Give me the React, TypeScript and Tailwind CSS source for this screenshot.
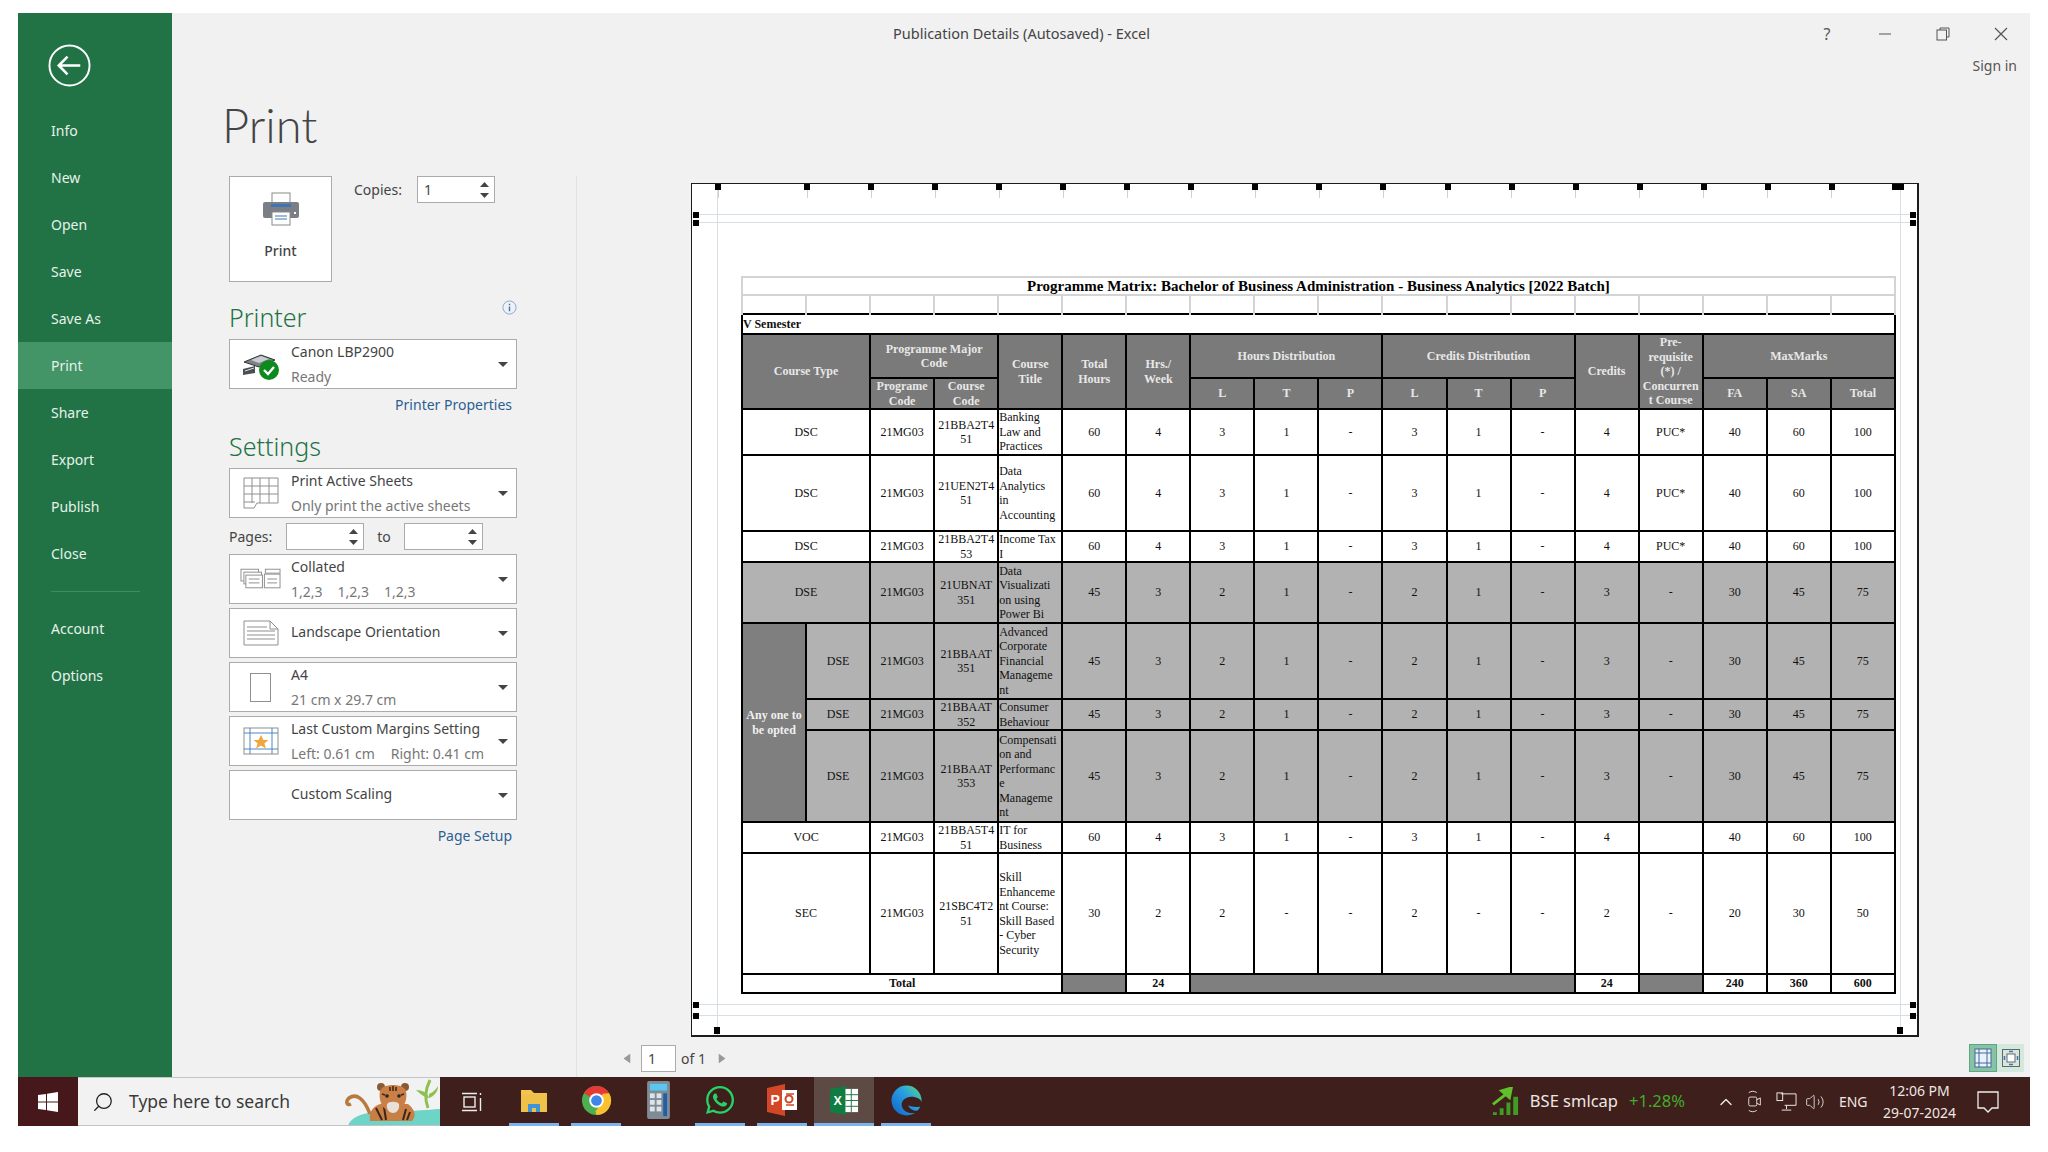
import { ReactNode } from "react";
import { ChevronUp, Search, Volume2 } from "lucide-react";
import { FaWhatsapp } from "react-icons/fa";

const menuTop = ["Info", "New", "Open", "Save", "Save As", "Print", "Share", "Export", "Publish", "Close"];

const Triangle = ({ up, size = "w-[9px] h-[5px]", color = "#444" }: { up?: boolean; size?: string; color?: string }) => (
  <svg viewBox="0 0 10 6" className={size} preserveAspectRatio="none">
    <path d={up ? "M5 0 L10 6 L0 6 Z" : "M0 0 L10 0 L5 6 Z"} fill={color} />
  </svg>
);

const Spinner = ({ value, w }: { value?: string; w: string }) => (
  <div className={`${w} h-[27px] bg-white border border-[#ababab] flex items-center pl-[6px] pr-[5px]`}>
    <span className="flex-1 text-[14px] text-[#444]">{value}</span>
    <div className="flex flex-col gap-[6px]">
      <Triangle up />
      <Triangle />
    </div>
  </div>
);

const Dropdown = ({ icon, title, sub }: { icon?: ReactNode; title: string; sub?: ReactNode }) => (
  <div className="w-[288px] h-[50px] bg-white border border-[#ababab] flex items-center">
    <div className="w-[61px] flex justify-center shrink-0">{icon}</div>
    <div className={`flex-1 flex flex-col min-w-0 whitespace-nowrap leading-[25px] text-[14px] text-[#444] ${sub ? "" : "pb-[3px]"}`}>
      <span>{title}</span>
      {sub && <span className="text-[#777]">{sub}</span>}
    </div>
    <div className="mr-[8px] shrink-0 flex">
      <Triangle size="w-[10px] h-[5px]" />
    </div>
  </div>
);

const PrinterIcon = () => (
  <svg viewBox="0 0 36 34" className="w-[36px] h-[34px]">
    <rect x="9" y="1" width="18" height="11" fill="#fff" stroke="#8a8a8a" />
    <rect x="0" y="10" width="36" height="16" rx="2" fill="#7b7f85" />
    <rect x="8" y="12" width="20" height="3" fill="#3f74b5" />
    <rect x="9" y="20" width="18" height="13" fill="#fff" stroke="#8a8a8a" />
    <path d="M12 24h12M12 27h12" stroke="#3f74b5" />
    <rect x="31" y="20" width="2" height="2" fill="#fff" />
  </svg>
);

const SmallPrinter = () => (
  <svg viewBox="0 0 40 32" className="w-[40px] h-[32px]">
    <path d="M3 14 L20 7 L34 12 L18 19 Z" fill="#7d8288" stroke="#333" />
    <path d="M10 12 L20 8 L28 11 L18 15 Z" fill="#c9ccd0" />
    <path d="M2 21 L14 18 L14 25 L2 27 Z" fill="#4b4f55" />
    <path d="M4 23 L13 20" stroke="#ddd" />
    <circle cx="28" cy="22" r="10" fill="#0c8a1e" />
    <path d="M23 22 L27 26 L33 19" fill="none" stroke="#fff" strokeWidth="2.4" />
  </svg>
);

const SheetsIcon = () => (
  <svg viewBox="0 0 36 32" className="w-[36px] h-[32px]" fill="none" stroke="#8f8f8f">
    <path d="M1 1h34v25H14l-3 5H1z" fill="#fff" />
    <path d="M1 9h34M1 17h34M1 25h11M9 1v25M17 1v25M26 1v25" />
  </svg>
);

const CollatedIcon = () => (
  <svg viewBox="0 0 42 22" className="w-[41px] h-[22px]" fill="#fff" stroke="#8f8f8f">
    <rect x="1" y="1" width="18" height="12" />
    <rect x="4" y="4" width="18" height="12" />
    <rect x="6" y="7" width="17" height="13" />
    <rect x="26" y="1" width="15" height="4" />
    <rect x="25" y="6" width="16" height="14" />
    <path d="M9 11h11M9 15h11M28 11h10M28 15h10" />
  </svg>
);

const LandscapeIcon = () => (
  <svg viewBox="0 0 36 26" className="w-[36px] h-[26px]" fill="none" stroke="#8f8f8f">
    <path d="M1 1h26l8 8v16H1z" fill="#fff" />
    <path d="M27 1v8h8M4 7h20M4 11h28M4 15h28M4 19h28" />
  </svg>
);

const MarginsIcon = () => (
  <svg viewBox="0 0 36 28" className="w-[36px] h-[28px]" fill="none">
    <rect x="1" y="1" width="34" height="26" fill="#fff" stroke="#8f8f8f" />
    <path d="M7 1v26M29 1v26M1 6h34M1 22h34" stroke="#4a86c8" />
    <path d="M18 8l2.4 5h5l-4 3.4 1.5 5-4.9-3-4.9 3 1.5-5-4-3.4h5z" fill="#f0a63c" />
  </svg>
);

const ChromeIcon = () => (
  <svg viewBox="0 0 32 32" className="w-[31px] h-[31px]">
    <circle cx="16" cy="16" r="15" fill="#4caf50" />
    <path d="M16 1a15 15 0 0 1 13 7.5L16 16 3 8.5A15 15 0 0 1 16 1z" fill="#e53935" />
    <path d="M29 8.5A15 15 0 0 1 16 31l-1-4 7-9 0-9z" fill="#fbc02d" />
    <circle cx="16" cy="16" r="7.5" fill="#fff" />
    <circle cx="16" cy="16" r="5.5" fill="#3f86e8" />
  </svg>
);

const TaskApp = ({ children, line = true, active }: { children: ReactNode; line?: boolean; active?: boolean }) => (
  <div className="w-[62px] h-full flex justify-center shrink-0">
    <div
      className={`h-full flex items-center justify-center border-b-[3px] ${active ? "w-[60px] bg-[#5d4a45]" : "w-[50px]"} ${
        line ? "border-[#7ab4ea]" : "border-transparent"
      }`}
    >
      {children}
    </div>
  </div>
);

const Tiger = () => (
  <svg viewBox="0 0 100 48" className="w-[100px] h-[48px] ml-auto shrink-0">
    <path d="M8 48 C12 34 40 32 62 33 C80 33 95 31 100 31 L100 48 Z" fill="#6fd4c8" />
    <path d="M88 30 C84 20 86 10 90 2" stroke="#8cc152" strokeWidth="3" fill="none" />
    <path d="M88 20 C82 18 78 14 76 12 C84 12 88 16 89 20 M89 16 C94 14 97 10 98 8 C98 14 94 18 89 20" fill="#8cc152" />
    <path d="M30 36 C24 20 16 15 9 20 C5 24 7 28 11 26" stroke="#b9793d" strokeWidth="3.5" fill="none" />
    <path d="M30 43 C28 30 38 24 50 26 L68 26 C76 32 76 39 72 43 Z" fill="#c87f45" />
    <path d="M36 30l6 12M44 29l2 13M66 31l-3 11M70 34l-3 8" stroke="#3d2518" strokeWidth="2" />
    <circle cx="41" cy="9" r="4" fill="#8a5a34" />
    <circle cx="65" cy="9" r="4" fill="#8a5a34" />
    <path d="M40 13 C42 5 64 5 66 13 C68 24 62 34 53 34 C44 34 38 24 40 13 Z" fill="#c97f45" />
    <path d="M47 26 C49 23 57 23 59 26 C60 32 56 35 53 35 C50 35 46 32 47 26Z" fill="#e6e2da" />
    <circle cx="47" cy="18" r="1.8" fill="#1e2a2a" />
    <circle cx="59" cy="18" r="1.8" fill="#1e2a2a" />
    <path d="M50 9v4M53 8v5M56 9v4M42 16l3 1M64 16l-3 1" stroke="#3d2518" strokeWidth="1.5" />
  </svg>
);

type Row = {
  type?: string;
  code: string;
  title: string;
  nums: string[];
  h: string;
  shade?: boolean;
  opt?: boolean;
};

const dscNums = ["60", "4", "3", "1", "-", "3", "1", "-", "4", "PUC*", "40", "60", "100"];
const dseNums = ["45", "3", "2", "1", "-", "2", "1", "-", "3", "-", "30", "45", "75"];

const rows: Row[] = [
  { type: "DSC", code: "21BBA2T4\n51", title: "Banking\nLaw and\nPractices", nums: dscNums, h: "h-[46px]" },
  { type: "DSC", code: "21UEN2T4\n51", title: "Data\nAnalytics\nin\nAccounting", nums: dscNums, h: "h-[76px]" },
  { type: "DSC", code: "21BBA2T4\n53", title: "Income Tax\nI", nums: dscNums, h: "h-[31px]" },
  { type: "DSE", code: "21UBNAT\n351", title: "Data\nVisualizati\non using\nPower Bi", nums: dseNums, h: "h-[61px]", shade: true },
  { type: "DSE", code: "21BBAAT\n351", title: "Advanced\nCorporate\nFinancial\nManageme\nnt", nums: dseNums, h: "h-[76px]", shade: true, opt: true },
  { type: "DSE", code: "21BBAAT\n352", title: "Consumer\nBehaviour", nums: dseNums, h: "h-[31px]", shade: true, opt: true },
  { type: "DSE", code: "21BBAAT\n353", title: "Compensati\non and\nPerformanc\ne\nManageme\nnt", nums: dseNums, h: "h-[92px]", shade: true, opt: true },
  { type: "VOC", code: "21BBA5T4\n51", title: "IT for\nBusiness", nums: ["60", "4", "3", "1", "-", "3", "1", "-", "4", "", "40", "60", "100"], h: "h-[30px]" },
  { type: "SEC", code: "21SBC4T2\n51", title: "Skill\nEnhanceme\nnt Course:\nSkill Based\n- Cyber\nSecurity", nums: ["30", "2", "2", "-", "-", "2", "-", "-", "2", "-", "20", "30", "50"], h: "h-[121px]" },
];

const cell = "border-2 border-black p-0 text-center align-middle whitespace-pre-line overflow-hidden";
const head = `${cell} bg-[#7a7a7a] text-[#e8e8e8] font-bold`;

const MatrixTable = () => (
  <table className="w-[1153px] table-fixed border-collapse font-['Liberation_Serif',serif] text-[12px] leading-[14.5px] text-[#111]">
    <colgroup>
      {Array.from({ length: 18 }, (_, i) => (
        <col key={i} className="w-[64.05px]" />
      ))}
    </colgroup>
    <tbody>
      <tr className="h-[18px]">
        <td colSpan={18} className="border-2 border-b-0 border-[#d4d4d4] p-0 text-center font-bold text-[15px] leading-[15px] text-black">
          Programme Matrix: Bachelor of Business Administration - Business Analytics [2022 Batch]
        </td>
      </tr>
      <tr className="h-[19px]">
        {Array.from({ length: 18 }, (_, i) => (
          <td key={i} className="border-2 border-b-0 border-[#d4d4d4] p-0" />
        ))}
      </tr>
      <tr className="h-[20px]">
        <td colSpan={18} className="border-2 border-black p-0 font-bold text-left">V Semester</td>
      </tr>
      <tr className="h-[44px]">
        <td colSpan={2} rowSpan={2} className={head}>Course Type</td>
        <td colSpan={2} className={head}>{"Programme Major\nCode"}</td>
        <td rowSpan={2} className={head}>{"Course\nTitle"}</td>
        <td rowSpan={2} className={head}>{"Total\nHours"}</td>
        <td rowSpan={2} className={head}>{"Hrs./\nWeek"}</td>
        <td colSpan={3} className={head}>Hours Distribution</td>
        <td colSpan={3} className={head}>Credits Distribution</td>
        <td rowSpan={2} className={head}>Credits</td>
        <td rowSpan={2} className={head}>{"Pre-\nrequisite\n(*) /\nConcurren\nt Course"}</td>
        <td colSpan={3} className={head}>MaxMarks</td>
      </tr>
      <tr className="h-[31px]">
        <td className={head}>{"Programe\nCode"}</td>
        <td className={head}>{"Course\nCode"}</td>
        {["L", "T", "P", "L", "T", "P", "FA", "SA", "Total"].map((t, i) => (
          <td key={i} className={head}>{t}</td>
        ))}
      </tr>
      {rows.map((r, i) => {
        const bg = r.shade ? "bg-[#b2b2b2]" : "bg-white";
        return (
          <tr key={i} className={r.h}>
            {i === 4 && (
              <td rowSpan={3} className={`${cell} bg-[#7f7f7f] text-[#f0f0f0] font-bold`}>{"Any one to\nbe opted"}</td>
            )}
            <td colSpan={r.opt ? 1 : 2} className={`${cell} ${bg}`}>{r.type}</td>
            <td className={`${cell} ${bg}`}>21MG03</td>
            <td className={`${cell} ${bg}`}>{r.code}</td>
            <td className={`${cell} ${bg} text-left`}>{r.title}</td>
            {r.nums.map((n, j) => (
              <td key={j} className={`${cell} ${bg}`}>{n}</td>
            ))}
          </tr>
        );
      })}
      <tr className="h-[19px] font-bold">
        <td colSpan={5} className={`${cell} bg-white`}>Total</td>
        <td className={`${cell} bg-[#7f7f7f]`} />
        <td className={`${cell} bg-white`}>24</td>
        <td colSpan={6} className={`${cell} bg-[#7f7f7f]`} />
        <td className={`${cell} bg-white`}>24</td>
        <td className={`${cell} bg-[#7f7f7f]`} />
        <td className={`${cell} bg-white`}>240</td>
        <td className={`${cell} bg-white`}>360</td>
        <td className={`${cell} bg-white`}>600</td>
      </tr>
    </tbody>
  </table>
);

// handles along the top edge of the preview, x measured from the page's left side
const topHandles = [26, ...Array.from({ length: 17 }, (_, i) => 115 + i * 64.05)];

const PagePreview = () => (
  <div className="relative w-[1228px] h-[854px] bg-white border-t border-l border-r-2 border-b-2 border-[#1c1c1c] pl-[49px] pt-[92px]">
    <MatrixTable />
    <div className="absolute left-0 right-0 top-[30px] h-px bg-[#d9dee6]" />
    <div className="absolute left-0 right-0 top-[38px] h-px bg-[#d9dee6]" />
    <div className="absolute left-0 right-0 top-[820px] h-px bg-[#d9dee6]" />
    <div className="absolute left-0 right-0 top-[831px] h-px bg-[#d9dee6]" />
    <div className="absolute top-0 bottom-0 left-[25px] w-px bg-[#d9dee6]" />
    <div className="absolute top-0 bottom-0 left-[1208px] w-px bg-[#d9dee6]" />
    {topHandles.map((x, i) => (
      <div key={i} className="absolute top-0 flex flex-col items-center w-[6px]" style={{ left: x - 3 }}>
        <div className="w-[6px] h-[6px] bg-black" />
        <div className="w-px h-[8px] bg-[#d0d0d0]" />
      </div>
    ))}
    <div className="absolute top-0 left-[1200px] w-[12px] h-[6px] bg-black" />
    <div className="absolute left-[1px] top-[28px] w-[6px] h-[6px] bg-black" />
    <div className="absolute left-[1px] top-[36px] w-[6px] h-[6px] bg-black" />
    <div className="absolute left-[1218px] top-[28px] w-[6px] h-[6px] bg-black" />
    <div className="absolute left-[1218px] top-[36px] w-[6px] h-[6px] bg-black" />
    <div className="absolute left-[1px] top-[818px] w-[6px] h-[6px] bg-black" />
    <div className="absolute left-[1px] top-[829px] w-[6px] h-[6px] bg-black" />
    <div className="absolute left-[1218px] top-[818px] w-[6px] h-[6px] bg-black" />
    <div className="absolute left-[1218px] top-[829px] w-[6px] h-[6px] bg-black" />
    <div className="absolute left-[22px] top-[843px] w-[6px] h-[7px] bg-black" />
    <div className="absolute left-[1205px] top-[843px] w-[6px] h-[7px] bg-black" />
  </div>
);

const Sidebar = () => (
  <aside className="w-[154px] bg-[#217346] text-[#e6f2ea] text-[14px] flex flex-col shrink-0">
    <div className="h-[94px] pt-[31px] pl-[30px]">
      <svg viewBox="0 0 44 44" className="w-[43px] h-[43px]" fill="none" stroke="#fff" strokeWidth="2">
        <circle cx="22" cy="22" r="20.5" />
        <path d="M33 22H12M20 13l-9 9 9 9" strokeWidth="2.6" />
      </svg>
    </div>
    {menuTop.map((m) => (
      <div key={m} className={`h-[47px] flex items-center pl-[33px] ${m === "Print" ? "bg-[#439467]" : ""}`}>
        {m}
      </div>
    ))}
    <div className="ml-[33px] mt-[14px] mb-[13px] w-[89px] h-px bg-[#3f8c60]" />
    {["Account", "Options"].map((m) => (
      <div key={m} className="h-[47px] flex items-center pl-[33px]">{m}</div>
    ))}
  </aside>
);

const SettingsPanel = () => (
  <div className="w-[405px] shrink-0 border-r border-[#e3e3e3] pl-[57px] text-[14px] text-[#444]">
    <div className="flex">
      <div className="w-[103px] h-[106px] bg-white border border-[#ababab] flex flex-col items-center pt-[15px]">
        <PrinterIcon />
        <span className="mt-[14px] font-medium">Print</span>
      </div>
      <div className="flex ml-[22px] items-start">
        <span className="w-[63px] h-[27px] flex items-center">Copies:</span>
        <Spinner value="1" w="w-[78px]" />
      </div>
    </div>

    <div className="w-[288px] h-[57px] flex justify-between">
      <span className="pt-[19px] text-[25px] leading-[32px] font-light text-[#217346]">Printer</span>
      <svg viewBox="0 0 16 16" className="w-[15px] h-[15px] mt-[18px] mr-0" fill="none" stroke="#7fa7d8">
        <circle cx="8" cy="8" r="7" />
        <path d="M8 7v5M8 4v1.5" stroke="#3f74b5" strokeWidth="1.5" />
      </svg>
    </div>
    <Dropdown icon={<SmallPrinter />} title="Canon LBP2900" sub="Ready" />
    <div className="w-[288px] h-[30px] flex items-center justify-end pr-[5px] text-[#2e5f91]">Printer Properties</div>

    <div className="h-[49px] pt-[11px] text-[25px] leading-[32px] font-light text-[#217346]">Settings</div>
    <div className="flex flex-col gap-[4px] w-[288px]">
      <Dropdown icon={<SheetsIcon />} title="Print Active Sheets" sub="Only print the active sheets" />
      <div className="flex items-center h-[27px] mt-[1px]">
        <span className="w-[57px]">Pages:</span>
        <Spinner w="w-[78px]" />
        <span className="w-[40px] text-center">to</span>
        <Spinner w="w-[79px]" />
      </div>
      <Dropdown
        icon={<CollatedIcon />}
        title="Collated"
        sub={
          <span className="flex gap-[15px]">
            <span>1,2,3</span>
            <span>1,2,3</span>
            <span>1,2,3</span>
          </span>
        }
      />
      <Dropdown icon={<LandscapeIcon />} title="Landscape Orientation" />
      <Dropdown
        icon={<div className="w-[21px] h-[29px] border border-[#8f8f8f] bg-white" />}
        title="A4"
        sub="21 cm x 29.7 cm"
      />
      <Dropdown
        icon={<MarginsIcon />}
        title="Last Custom Margins Setting"
        sub={
          <span className="flex gap-[16px]">
            <span>Left: 0.61 cm</span>
            <span>Right: 0.41 cm</span>
          </span>
        }
      />
      <Dropdown title="Custom Scaling" />
      <div className="h-[23px] flex items-center justify-end pr-[5px] text-[#2e5f91]">Page Setup</div>
    </div>
  </div>
);

const PreviewPanel = () => (
  <div className="flex-1 flex flex-col pl-[114px] pt-[7px]">
    <PagePreview />
    <div className="flex items-center mt-[7px] h-[28px] -ml-[69px] text-[14px] text-[#444]">
      <Triangle up size="w-[10px] h-[7px] -rotate-90" color="#999" />
      <div className="ml-[9px] w-[35px] h-[27px] bg-white border border-[#ababab] flex items-center pl-[6px]">1</div>
      <span className="ml-[5px]">of 1</span>
      <div className="ml-[11px] flex">
        <Triangle up size="w-[10px] h-[7px] rotate-90" color="#999" />
      </div>
      <div className="ml-auto mr-[6px] flex">
        <div className="w-[28px] h-[28px] bg-[#86c3a3] border border-[#5fa583] flex items-center justify-center">
          <svg viewBox="0 0 20 20" className="w-[20px] h-[20px]" fill="#eaf2fb" stroke="#44699a">
            <rect x="2" y="1" width="16" height="18" />
            <path d="M6 1v18M14 1v18M2 5h16M2 15h16" />
          </svg>
        </div>
        <div className="w-[27px] h-[28px] bg-[#d4e9dd] flex items-center justify-center">
          <svg viewBox="0 0 20 20" className="w-[20px] h-[20px]" fill="none" stroke="#666">
            <rect x="1.5" y="1.5" width="17" height="17" />
            <rect x="6" y="6" width="8" height="8" fill="#fff" />
            <path d="M8 3.5h4M8 16.5h4M3.5 8v4M16.5 8v4" stroke="#3f74b5" strokeWidth="1.5" />
          </svg>
        </div>
      </div>
    </div>
  </div>
);

const Taskbar = () => (
  <div className="h-[49px] bg-[#3e1f1b] flex items-stretch text-[#efe7e4] shrink-0">
    <div className="w-[60px] bg-[#46181c] flex items-center justify-center shrink-0">
      <svg viewBox="0 0 20 20" className="w-[20px] h-[20px]" fill="#fff">
        <path d="M0 3l8-1v7.5H0zM9 1.8L20 0v9.5H9zM0 10.5h8V18l-8-1zM9 10.5h11V20L9 18.2z" />
      </svg>
    </div>
    <div className="w-[362px] bg-[#f2f2f2] border-t border-b border-[#c4c4c4] flex items-center pl-[14px] overflow-hidden shrink-0">
      <Search className="w-[22px] h-[22px] text-[#222] -scale-x-100" strokeWidth={1.4} />
      <span className="ml-[15px] text-[17.5px] text-[#3a3a3a] whitespace-nowrap">Type here to search</span>
      <Tiger />
    </div>
    <div className="w-[63px] flex items-center justify-center shrink-0">
      <svg viewBox="0 0 22 20" className="w-[22px] h-[20px]" fill="none" stroke="#eee" strokeWidth="1.4">
        <rect x="3" y="5" width="11" height="10" />
        <path d="M1 1.5h15M1 18.5h15M19.5 1v2M19.5 6v13" />
      </svg>
    </div>
    <TaskApp>
      <svg viewBox="0 0 28 28" className="w-[28px] h-[28px]">
        <path d="M1 4h10l3 3h13v19H1z" fill="#f4c44e" />
        <rect x="1" y="8" width="26" height="18" fill="#f0c14a" />
        <path d="M8 26v-8h12v8h-4v-4h-4v4z" fill="#3f94d8" />
      </svg>
    </TaskApp>
    <TaskApp>
      <ChromeIcon />
    </TaskApp>
    <TaskApp line={false}>
      <svg viewBox="0 0 24 40" className="w-[23px] h-[38px]">
        <rect width="24" height="40" rx="2" fill="#7f8b95" />
        <rect x="3" y="3" width="18" height="7" fill="#59c6f2" />
        <g fill="#dfe4e8">
          <rect x="3" y="13" width="5" height="5" />
          <rect x="10" y="13" width="5" height="5" />
          <rect x="3" y="20" width="5" height="5" />
          <rect x="10" y="20" width="5" height="5" />
          <rect x="3" y="27" width="5" height="5" />
          <rect x="10" y="27" width="5" height="5" />
        </g>
        <rect x="17" y="13" width="4" height="24" fill="#1f5fa8" />
      </svg>
    </TaskApp>
    <TaskApp>
      <FaWhatsapp className="w-[32px] h-[32px] text-[#25d366]" />
    </TaskApp>
    <TaskApp>
      <svg viewBox="0 0 30 32" className="w-[30px] h-[32px]">
        <path d="M0 4l18-4v32L0 28z" fill="#d24726" />
        <rect x="15" y="6" width="15" height="20" fill="#fff" />
        <path d="M19 10h8M19 21h8" stroke="#d24726" strokeWidth="1.5" />
        <circle cx="22" cy="15" r="3.5" fill="none" stroke="#d24726" strokeWidth="2" />
        <text x="3.5" y="21" fontSize="14" fontWeight="700" fill="#fff" fontFamily="Liberation Sans">P</text>
      </svg>
    </TaskApp>
    <TaskApp active>
      <svg viewBox="0 0 30 30" className="w-[29px] h-[29px]">
        <path d="M0 3l17-3v30L0 27z" fill="#107c41" />
        <rect x="16" y="3" width="13" height="24" fill="#fff" />
        <path d="M16 9h13M16 15h13M16 21h13M22 3v24" stroke="#217346" />
        <text x="3.5" y="20" fontSize="13" fontWeight="700" fill="#fff" fontFamily="Liberation Sans">X</text>
      </svg>
    </TaskApp>
    <TaskApp>
      <svg viewBox="0 0 32 32" className="w-[31px] h-[31px]">
        <defs>
          <linearGradient id="edge" x1="0" y1="1" x2="1" y2="0">
            <stop offset="0" stopColor="#0f62c8" />
            <stop offset="0.6" stopColor="#2aa0e0" />
            <stop offset="1" stopColor="#5fdc7a" />
          </linearGradient>
        </defs>
        <circle cx="16" cy="16" r="15.5" fill="url(#edge)" />
        <path d="M32 20c0-6-6-8-11-8-6 0-10 4-10 8 0 5 5 9 11 9 4 0 7-1 9-3-3 1-7 1-10-1-2-1-3-3-3-4 3 2 14 3 14-1z" fill="#3e1f1b" />
      </svg>
    </TaskApp>

    <div className="ml-auto flex items-center pr-[31px]">
      <svg viewBox="0 0 30 30" className="w-[29px] h-[29px]">
        <path d="M2 26h4v3H2zM9 22h4v7H9zM16 16h4v13h-4zM23 10h5v19h-5z" fill="#3f9d24" />
        <path d="M2 18 L16 7 M11 4 L21 1 L19 11 Z" stroke="#5fbf2c" strokeWidth="3" fill="#5fbf2c" />
      </svg>
      <span className="ml-[10px] text-[16.5px] whitespace-nowrap">BSE smlcap</span>
      <span className="ml-[11px] text-[16.5px] text-[#3fae2a] whitespace-nowrap">+1.28%</span>
      <ChevronUp className="ml-[31px] w-[20px] h-[20px] text-[#eee]" strokeWidth={1.6} />
      <svg viewBox="0 0 18 26" className="ml-[11px] w-[16px] h-[25px]" fill="none" stroke="#eee">
        <rect x="2" y="8" width="9" height="10" rx="1.5" />
        <path d="M11 11l4-2v8l-4-2M2 3c3-2 6-2 9 0M2 23c3 2 6 2 9 0" />
      </svg>
      <svg viewBox="0 0 22 22" className="ml-[13px] w-[21px] h-[21px]" fill="none" stroke="#eee">
        <path d="M5 3h16v12H9M11 15v4M6 20h10" />
        <rect x="1" y="2" width="6" height="8" />
      </svg>
      <Volume2 className="ml-[8px] w-[20px] h-[20px] text-[#ddd]" strokeWidth={1.1} />
      <span className="ml-[14px] text-[14px] w-[30px]">ENG</span>
      <div className="ml-[14px] flex flex-col items-center text-[14px] leading-[22px] whitespace-nowrap">
        <span>12:06 PM</span>
        <span>29-07-2024</span>
      </div>
      <svg viewBox="0 0 22 22" className="ml-[21px] w-[22px] h-[22px]" fill="none" stroke="#eee" strokeWidth="1.3">
        <path d="M1 1h20v16h-6l-4 4-4-4H1z" />
      </svg>
    </div>
  </div>
);

export default function App() {
  return (
    <div className="w-[2048px] h-[1152px] bg-white pl-[18px] pt-[13px] font-['Noto_Sans',sans-serif] overflow-hidden">
      <div className="w-[2012px] h-[1113px] flex flex-col">
        <div className="h-[1064px] flex">
          <Sidebar />
          <main className="flex-1 bg-[#f1f1f1] flex flex-col min-w-0">
            <div className="h-[80px] shrink-0 flex flex-col">
              <div className="h-[42px] flex items-center text-[#444]">
                <span className="ml-[721px] text-[14.5px] whitespace-nowrap">Publication Details (Autosaved) - Excel</span>
                <div className="ml-auto flex items-center text-[#555]">
                  <span className="w-[58px] text-center text-[16px]">?</span>
                  <svg viewBox="0 0 14 14" className="w-[58px] h-[14px]" stroke="#555" fill="none">
                    <path d="M1 7h12" />
                  </svg>
                  <svg viewBox="0 0 14 14" className="w-[58px] h-[14px]" stroke="#555" fill="none">
                    <rect x="1" y="3" width="9.5" height="10" />
                    <path d="M4 3V1h9v9h-2.5" />
                  </svg>
                  <svg viewBox="0 0 14 14" className="w-[14px] h-[14px] ml-[22px] mr-[22px]" stroke="#555" fill="none" strokeWidth="1.2">
                    <path d="M1 1l12 12M13 1L1 13" />
                  </svg>
                </div>
              </div>
              <div className="flex justify-end pr-[13px] text-[14px] text-[#555]">Sign in</div>
            </div>
            <div className="h-[83px] shrink-0 pl-[50px] font-['Lato',sans-serif] text-[47px] leading-[64px] font-light text-[#444]">Print</div>
            <div className="flex-1 flex min-h-0">
              <SettingsPanel />
              <PreviewPanel />
            </div>
          </main>
        </div>
        <Taskbar />
      </div>
    </div>
  );
}
